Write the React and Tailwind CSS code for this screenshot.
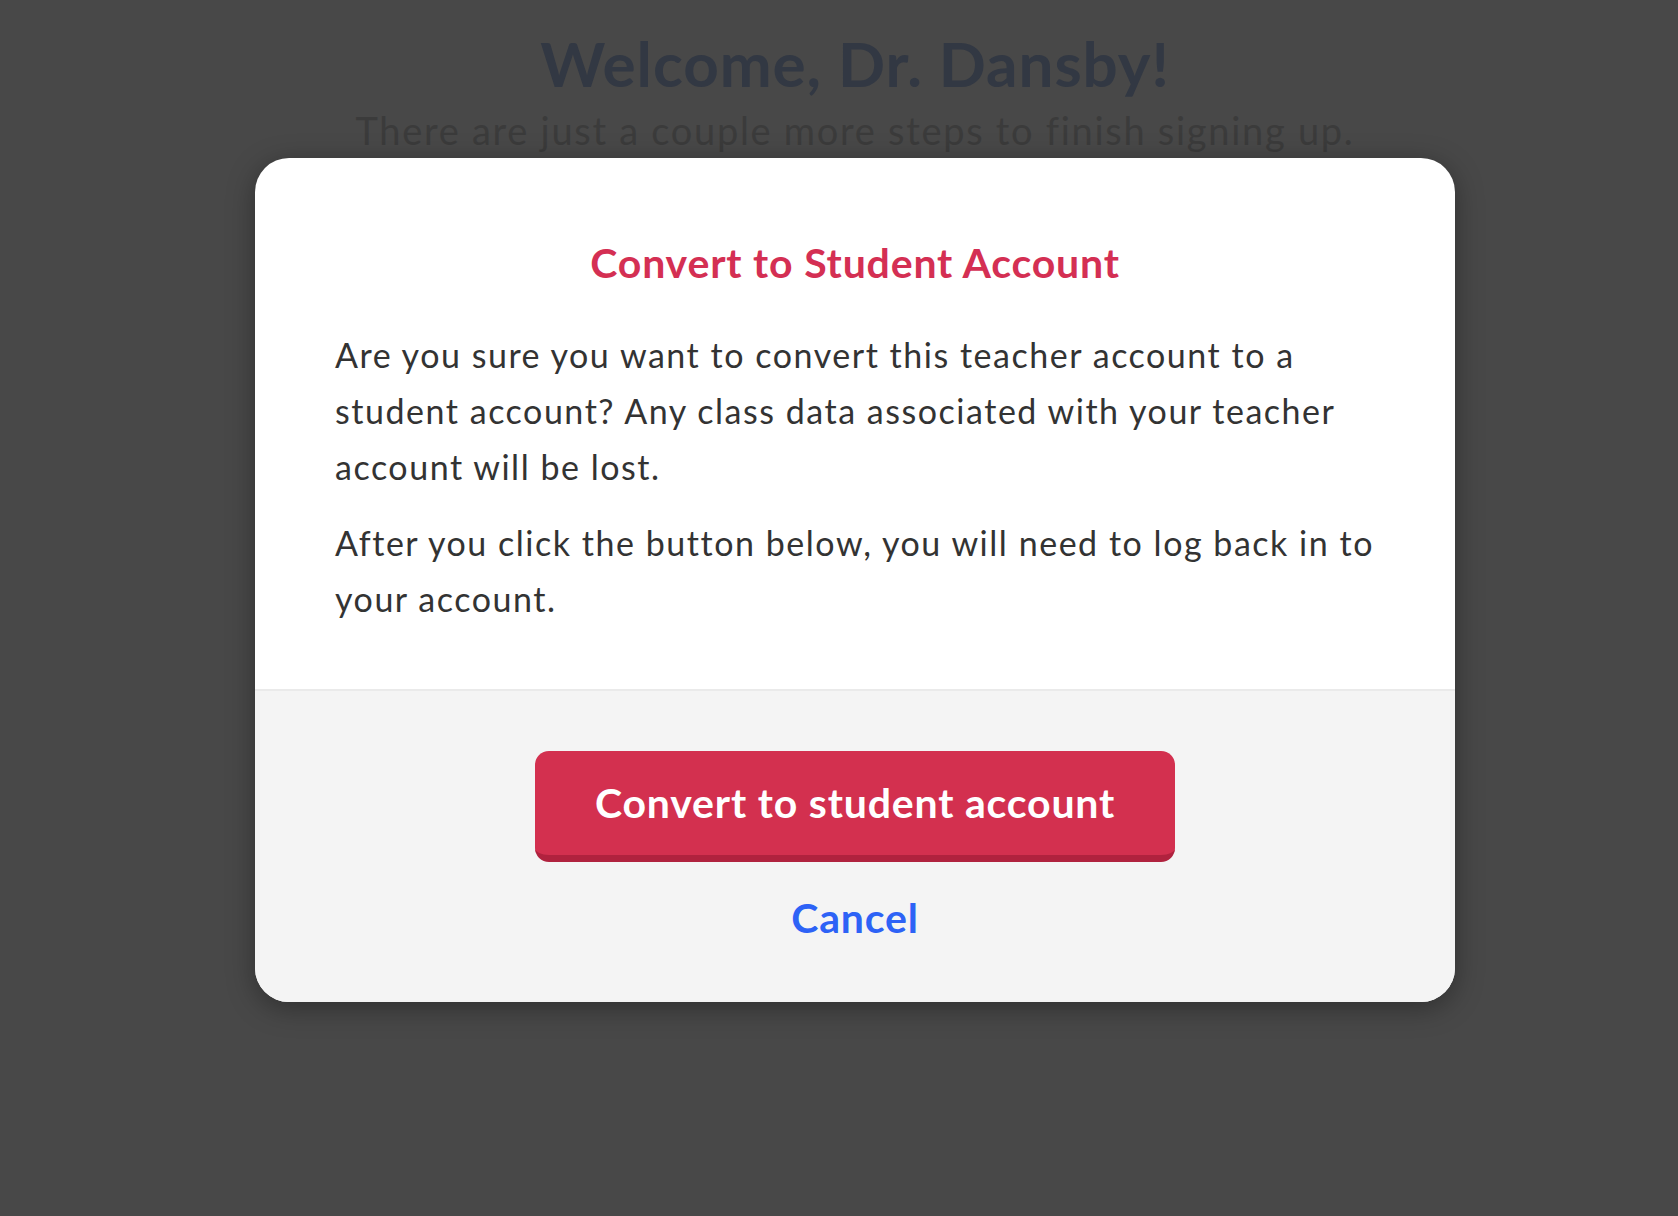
import React from "react";

export default function App() {
  const font = { fontFamily: "Lato, 'Noto Sans', sans-serif" };
  return (
    <div className="relative h-[1216px] w-full overflow-hidden bg-[#484848]" style={font}>
      <div className="flex flex-col items-center pl-[32px] pt-[26px]">
        <h1 className="text-[62px] font-bold leading-[1.2] tracking-[0.015em] text-[#323843]">Welcome, Dr. Dansby!</h1>
        <p className="mt-[8px] text-[38px] leading-[1.2] tracking-[0.045em] text-[#3b3b3b]">
          There are just a couple more steps to finish signing up.
        </p>
      </div>

      <div className="absolute inset-0 flex justify-center pl-[32px] pt-[158px]">
        <div className="h-fit w-[1200px] overflow-hidden rounded-[34px] bg-white shadow-[0_6px_28px_rgba(0,0,0,0.35)]">
          <div className="px-[80px] pb-[62px] pt-[80px]">
            <h2 className="text-center text-[41px] font-bold leading-[50px] tracking-[0.02em] text-[#d42f53]">
              Convert to Student Account
            </h2>
            <div className="mr-[-16px] mt-[39px] space-y-[20px] text-[34px] leading-[56px] tracking-[0.045em] text-[#333333]">
              <p>
                Are you sure you want to convert this teacher account to a<br />
                student account? Any class data associated with your teacher<br />
                account will be lost.
              </p>
              <p>
                After you click the button below, you will need to log back in to<br />
                your account.
              </p>
            </div>
          </div>
          <div className="flex flex-col items-center border-t-2 border-[#eaeaea] bg-[#f4f4f4] pb-[59px] pt-[60px]">
            <button className="h-[111px] w-[640px] rounded-[14px] border-b-[7px] border-[#b0223e] bg-[#d3304f] text-[41px] font-bold tracking-[0.02em] text-white">
              Convert to student account
            </button>
            <button className="mt-[31px] text-[41px] font-bold leading-[50px] tracking-[0.02em] text-[#2d62f6]">
              Cancel
            </button>
          </div>
        </div>
      </div>
    </div>
  );
}
